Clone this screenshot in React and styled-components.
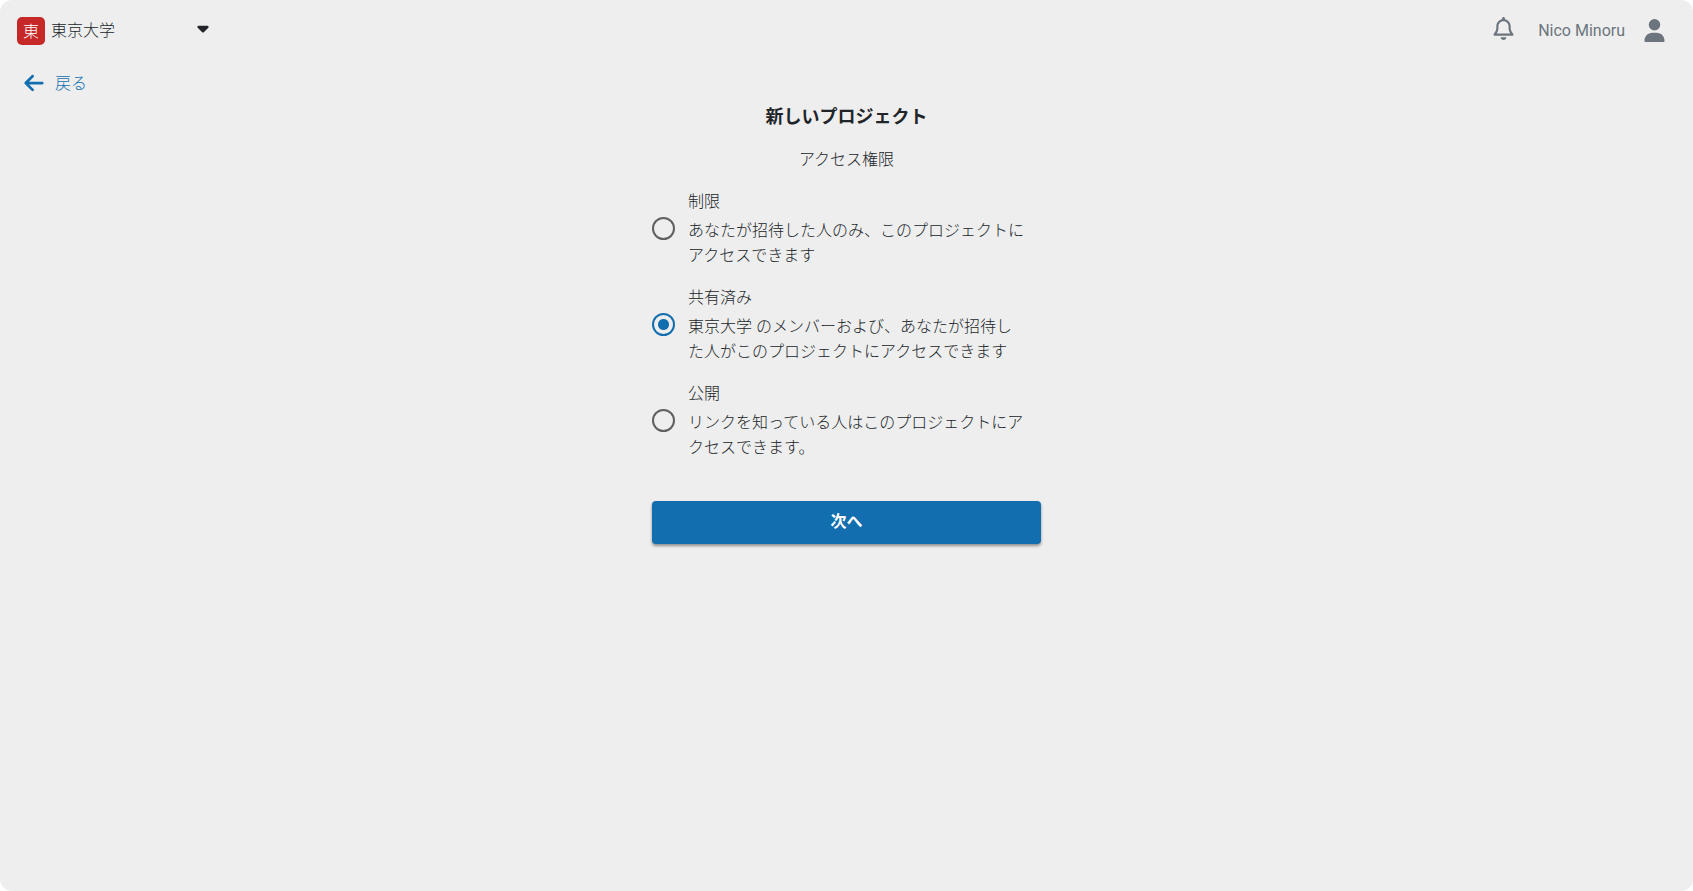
import { useState } from 'react';
import styled, { createGlobalStyle } from 'styled-components';
import { FaArrowLeft, FaCaretDown, FaRegBell, FaUser } from 'react-icons/fa6';

const GlobalStyle = createGlobalStyle`
    :root {
        --background-color: #eeeeee;
        --text-color: #212529;
        --muted-color: #6c757d;
        --primary-color: #126eae;
        --badge-color: #c62828;
    }

    * {
        box-sizing: border-box;
    }

    body {
        margin: 0;
        background: #ffffff;
        color: var(--text-color);
        font-family: Roboto, 'Noto Sans CJK JP', sans-serif;
        font-size: 16px;
        line-height: 25px;
    }
`;

const Page = styled.div`
    min-height: 100vh;
    background: var(--background-color);
    border-radius: 12px;
`;

const Header = styled.header`
    display: flex;
    align-items: center;
    justify-content: space-between;
    height: 62px;
    padding: 0 27px 0 17px;
`;

const Organization = styled.div`
    display: flex;
    align-items: center;
    gap: 6px;
    font-weight: 300;
`;

const Badge = styled.span`
    display: flex;
    align-items: center;
    justify-content: center;
    width: 28px;
    height: 28px;
    border-radius: 5px;
    background: var(--badge-color);
    color: #ffffff;
`;

const SelectBox = styled.div`
    display: grid;
    grid-template-columns: 143px 12px;
    align-items: center;

    select {
        grid-area: 1 / 1 / 2 / 3;
        appearance: none;
        height: 32px;
        padding: 0 20px 2px 0;
        border: 0;
        background: transparent;
        color: inherit;
        font: inherit;
        cursor: pointer;
    }

    svg {
        grid-area: 1 / 2 / 2 / 3;
        margin-bottom: 6px;
        pointer-events: none;
    }
`;

const Account = styled.div`
    display: flex;
    align-items: center;
    gap: 18px;
    padding-bottom: 1px;
    color: var(--muted-color);
`;

const IconButton = styled.button`
    display: flex;
    padding: 0;
    border: 0;
    background: transparent;
    color: inherit;
    cursor: pointer;
`;

const Bell = styled(IconButton)`
    margin-right: 5px;
    padding-bottom: 5px;
`;

const BackLink = styled.a`
    display: inline-flex;
    align-items: center;
    gap: 10px;
    margin-left: 23px;
    height: 42px;
    color: var(--primary-color);
    font-weight: 300;
    text-decoration: none;
`;

const Form = styled.form`
    display: flex;
    flex-direction: column;
    width: 100%;
    max-width: 389px;
    margin: 0 auto;
`;

const Title = styled.h1`
    margin: 0 0 18px;
    font-size: 18px;
    line-height: 25px;
    font-weight: 700;
    text-align: center;
`;

const Options = styled.fieldset`
    display: flex;
    flex-direction: column;
    gap: 17px;
    margin: 0;
    padding: 0;
    border: 0;
    font-weight: 300;

    legend {
        width: 100%;
        margin-bottom: 17px;
        padding: 0;
        text-align: center;
    }
`;

const OptionRow = styled.label`
    display: flex;
    align-items: center;
    gap: 13px;
    padding-right: 16px;
    cursor: pointer;
`;

const Radio = styled.input`
    appearance: none;
    flex: none;
    width: 23px;
    height: 23px;
    margin: 0;
    border: 2px solid #5f5f5f;
    border-radius: 50%;
    cursor: pointer;

    &:checked {
        border-color: var(--primary-color);
        background: radial-gradient(circle, var(--primary-color) 5px, transparent 6px);
    }
`;

const OptionText = styled.span`
    display: flex;
    flex-direction: column;
    gap: 4px;
`;

const Submit = styled.button`
    height: 43px;
    margin-top: 41px;
    padding: 0 0 3px;
    border: 0;
    border-radius: 4px;
    background: var(--primary-color);
    box-shadow: 0 2px 3px rgba(0, 0, 0, 0.4);
    color: #ffffff;
    font: inherit;
    font-weight: 700;
    cursor: pointer;
`;

const options = [
    {
        value: 'restricted',
        title: '制限',
        text: 'あなたが招待した人のみ、このプロジェクトにアクセスできます',
    },
    {
        value: 'shared',
        title: '共有済み',
        text: '東京大学 のメンバーおよび、あなたが招待した人がこのプロジェクトにアクセスできます',
    },
    {
        value: 'public',
        title: '公開',
        text: 'リンクを知っている人はこのプロジェクトにアクセスできます。',
    },
];

const Option = props => {
    return (
        <OptionRow>
            <Radio
                type="radio"
                name="access"
                value={props.value}
                checked={props.checked}
                onChange={() => props.onSelect(props.value)}
            />
            <OptionText>
                <span>{props.title}</span>
                <span>{props.text}</span>
            </OptionText>
        </OptionRow>
    );
};

const App = () => {
    const [access, setAccess] = useState('shared');

    return (
        <Page lang="ja">
            <GlobalStyle />
            <Header>
                <Organization>
                    <Badge>東</Badge>
                    <SelectBox>
                        <select aria-label="組織">
                            <option>東京大学</option>
                        </select>
                        <FaCaretDown size={18} />
                    </SelectBox>
                </Organization>
                <Account>
                    <Bell type="button" aria-label="通知">
                        <FaRegBell size={23} />
                    </Bell>
                    <span>Nico Minoru</span>
                    <IconButton type="button" aria-label="アカウント">
                        <FaUser size={23} />
                    </IconButton>
                </Account>
            </Header>
            <BackLink href="#back">
                <FaArrowLeft size={22} />
                戻る
            </BackLink>
            <Form onSubmit={e => e.preventDefault()}>
                <Title>新しいプロジェクト</Title>
                <Options>
                    <legend>アクセス権限</legend>
                    {options.map(option => (
                        <Option
                            key={option.value}
                            {...option}
                            checked={access === option.value}
                            onSelect={setAccess}
                        />
                    ))}
                </Options>
                <Submit type="submit">次へ</Submit>
            </Form>
        </Page>
    );
};

export default App;
